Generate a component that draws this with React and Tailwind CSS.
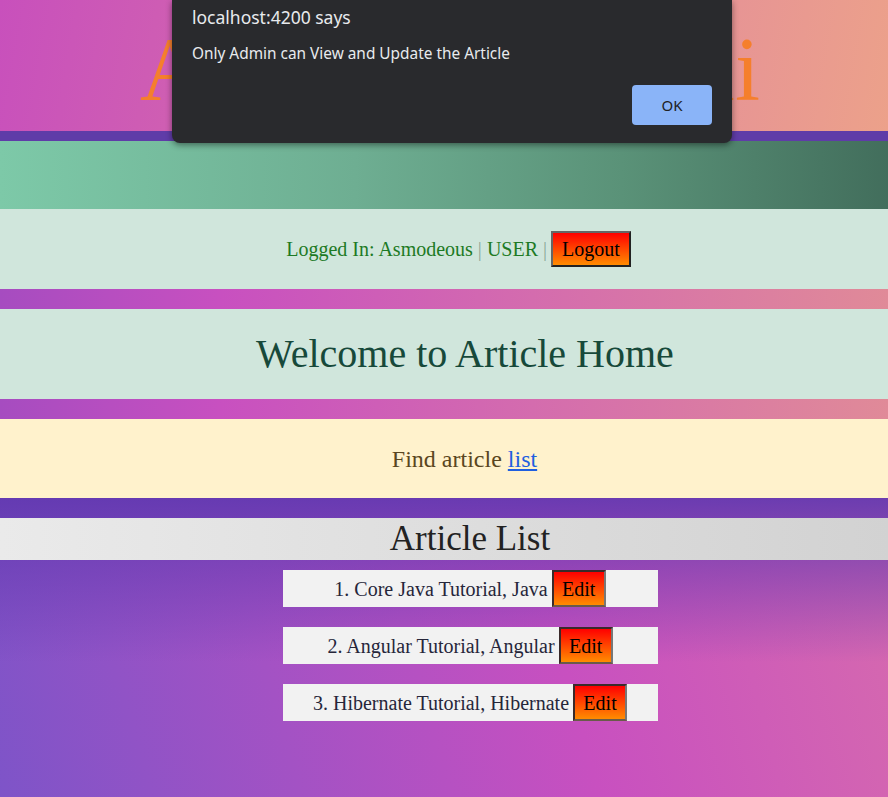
const serif = { fontFamily: '"Liberation Serif", "Times New Roman", serif' };

function GradButton({ children, className = "" }) {
  return (
    <button
      type="button"
      className={`bg-[linear-gradient(to_bottom,#ff0000,#ff8c00)] text-black ${className}`}
    >
      {children}
    </button>
  );
}

function AlertDialog() {
  return (
    <div
      className="absolute left-[172px] top-0 h-[143px] w-[560px] rounded-b-[8px] bg-[#292a2d] px-5 shadow-[0_2px_6px_rgba(0,0,0,0.45)]"
      style={{ fontFamily: '"Noto Sans", "Open Sans", sans-serif' }}
    >
      <div className="pt-[4px] text-[17.5px] leading-[26px] text-[#e8eaed]">localhost:4200 says</div>
      <div className="mt-[13px] text-[15.4px] leading-[22px] text-[#e8eaed]">
        Only Admin can View and Update the Article
      </div>
      <div className="mt-[20px] flex justify-end">
        <button
          type="button"
          className="h-[40px] w-[80px] rounded-[4px] bg-[#8ab4f8] text-[15px] text-[#202124]"
        >
          OK
        </button>
      </div>
    </div>
  );
}

const articles = [
  "1. Core Java Tutorial, Java",
  "2. Angular Tutorial, Angular",
  "3. Hibernate Tutorial, Hibernate",
];

export default function App() {
  return (
    <div className="relative flex min-h-screen flex-col" style={serif}>
      {/* header */}
      <header className="border-b-[10px] border-[#5f3ca8] bg-[linear-gradient(100deg,#c850bc_0%,#d468ac_35%,#e48e9a_70%,#eca18a_100%)]">
        <h1 className="h-[131px] pl-[12px] pt-[19px] text-center text-[90px] leading-[101px] text-[#f57f2c]">
          Article Blog Bali
        </h1>
      </header>

      <div className="h-[68px] bg-[linear-gradient(to_right,#7dc9a8_0%,#6eae92_40%,#5a9278_70%,#426e5c_100%)]" />

      <div className="flex h-[80px] items-center justify-center bg-[#d0e6dc] pl-[29px] text-[20px] text-[#1d7a24]">
        <span>Logged In: Asmodeous</span>
        <span className="mx-[5px] text-[#8aa898]">|</span>
        <span>USER</span>
        <span className="ml-[5px] mr-[4px] text-[#8aa898]">|</span>
        <GradButton className="mt-[-1px] h-[36px] border-2 border-b-[#222] border-l-[#666] border-r-[#222] border-t-[#666] px-[9px] text-[20px]">
          Logout
        </GradButton>
      </div>

      <div className="bg-[linear-gradient(to_right,#a64cc0_0%,#c850c0_25%,#d46cae_60%,#e08a98_100%)] py-[20px]">
        <div className="flex h-[90px] items-center justify-center bg-[#d0e6dc] pl-[42px] text-[40px] text-[#17493a]">
          Welcome to Article Home
        </div>
      </div>

      <div className="flex h-[79px] items-center justify-center bg-[#fff2cc] pl-[41px] text-[24px] text-[#5a4620]">
        Find article&nbsp;<a href="#" className="text-[#1f5fe0] underline">list</a>
      </div>

      <section className="flex-1 bg-[linear-gradient(to_bottom,rgba(96,56,176,0.9)_0%,rgba(96,56,176,0.55)_22%,rgba(96,56,176,0)_55%),linear-gradient(75deg,#7e54c8_0%,#c850c0_62%,#d66aae_100%)] pt-[20px]">
        <div className="flex h-[42px] items-center justify-center bg-[linear-gradient(to_right,#eaeaea,#d2d2d2)] pl-[52px] text-[35px] text-[#222]">
          Article List
        </div>

        <ul className="flex flex-col items-center gap-[20px] pl-[52px] pt-[10px]">
          {articles.map((a) => (
            <li
              key={a}
              className="flex h-[37px] w-[375px] items-center justify-center bg-[#f2f2f2] text-[20px] text-[#26263a]"
            >
              <span className="mr-[4px]">{a}</span>
              <GradButton className="h-[37px] w-[54px] border-2 border-b-[#6a5a4a] border-l-[#3a2a2a] border-r-[#777] border-t-[#3a2a2a] text-[20px]">
                Edit
              </GradButton>
            </li>
          ))}
        </ul>
      </section>

      <AlertDialog />
    </div>
  );
}
